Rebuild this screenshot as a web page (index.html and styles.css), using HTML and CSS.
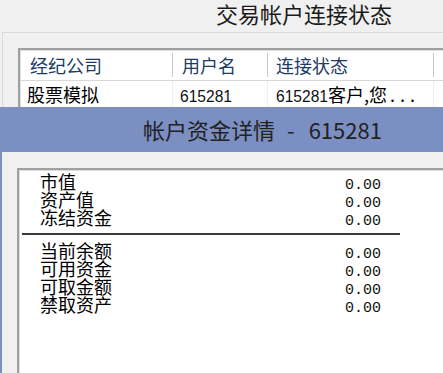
FILE: index.html
```html
<!DOCTYPE html>
<html lang="zh-CN">
<head>
    <meta charset="UTF-8">
    <title>交易帐户连接状态</title>
    <link rel="stylesheet" href="styles.css">
</head>
<body>
    <div class="top">
        <div class="top-title">交易帐户连接状态</div>
        <div class="group">
            <div class="grid">
                <div class="grid-head">
                    <div class="cell c1">经纪公司</div>
                    <div class="cell c2">用户名</div>
                    <div class="cell c3">连接状态</div>
                    <div class="cell c4"></div>
                </div>
                <div class="grid-row">
                    <div class="cell c1">股票模拟</div>
                    <div class="cell c2"><span class="num">615281</span></div>
                    <div class="cell c3"><span class="num">615281</span>客户,您<span class="dots">...</span></div>
                    <div class="cell c4"></div>
                </div>
            </div>
        </div>
    </div>

    <div class="detail">
        <div class="detail-title">帐户资金详情<span class="dash">-</span>615281</div>
        <div class="detail-body">
            <div class="panel">
                <div class="sheet">
                    <div class="line"><span>市值</span><span class="val">0.00</span></div>
                    <div class="line"><span>资产值</span><span class="val">0.00</span></div>
                    <div class="line"><span>冻结资金</span><span class="val">0.00</span></div>
                    <div class="rule"></div>
                    <div class="line"><span>当前余额</span><span class="val">0.00</span></div>
                    <div class="line"><span>可用资金</span><span class="val">0.00</span></div>
                    <div class="line"><span>可取金额</span><span class="val">0.00</span></div>
                    <div class="line"><span>禁取资产</span><span class="val">0.00</span></div>
                </div>
            </div>
        </div>
    </div>
</body>
</html>
```

FILE: styles.css
```css
* {
    margin: 0;
    padding: 0;
    box-sizing: border-box;
}

body {
    width: 443px;
    height: 373px;
    overflow: hidden;
    background: #f0f0f0;
    font-family: "Noto Sans CJK SC", "Noto Sans", sans-serif;
    color: #000;
}

/* upper window: connection status */
.top {
    height: 107px;
    overflow: hidden;
}

.top-title {
    height: 32px;
    padding-left: 216px;
    font-size: 22px;
    line-height: 26px;
    color: #1a1a1a;
}

.group {
    margin-left: 2px;
    padding: 15px 0 0 15px;
    border-top: 1px solid #dadada;
    border-left: 1px solid #dadada;
    height: 100px;
}

.grid {
    width: 520px;
    height: 80px;
    padding: 1px 0 0 1px;
    background: #fff;
    border-top: 2px solid #a0a0a0;
    border-left: 2px solid #a0a0a0;
    box-shadow: inset 1px 1px 0 #e0e0e0;
}

.grid-head {
    display: flex;
    height: 30px;
    padding: 2px 0 3px;
    border-bottom: 1px solid #d8d8d8;
    color: #203a66;
}

.grid-head .cell {
    height: 24px;
    line-height: 24px;
    font-size: 18px;
    border-right: 1px solid #c8c8c8;
}

.grid-row {
    display: flex;
    height: 26px;
}

.grid-row .cell {
    line-height: 26px;
    font-size: 18px;
    border-right: 1px solid #efefef;
}

.cell {
    white-space: nowrap;
    overflow: hidden;
}

.c1 { width: 152px; padding-left: 9px; }
.c2 { width: 95px; padding-left: 9px; }
.c3 { width: 166px; padding-left: 8px; }
.c4 { flex: 1; }

.grid-row .c1 { padding-left: 6px; }
.grid-row .c2 { padding-left: 7px; }

.num {
    font-family: "Liberation Sans", sans-serif;
    font-size: 15.6px;
    color: #111;
}

.dots {
    letter-spacing: 5px;
    margin-left: 3px;
}

/* lower window: fund details */
.detail-title {
    height: 45px;
    padding-left: 143px;
    background: #7b8fc2;
    font-size: 22px;
    line-height: 45px;
    color: #222;
    white-space: nowrap;
}

.dash {
    margin: 0 14px 0 12px;
}

.detail-body {
    height: 221px;
    padding: 16px 0 0 15px;
    border-left: 2px solid #7b8fc2;
    background: #f0f0f0;
}

.panel {
    height: 205px;
    padding: 1px 0 0 1px;
    background: #fff;
    border-top: 2px solid #a0a0a0;
    border-left: 2px solid #a0a0a0;
    box-shadow: inset 1px 1px 0 #dcdcdc;
}

.sheet {
    width: 380px;
    padding-top: 1px;
}

.line {
    display: flex;
    justify-content: space-between;
    align-items: baseline;
    padding: 0 19px 0 20px;
    height: 18px;
    font-size: 18px;
    line-height: 18px;
}

.val {
    font-family: "Liberation Mono", monospace;
    font-size: 15px;
    color: #111;
}

.rule {
    height: 2px;
    margin: 7px 0 6px 2px;
    background: #3a3a3a;
}
```
